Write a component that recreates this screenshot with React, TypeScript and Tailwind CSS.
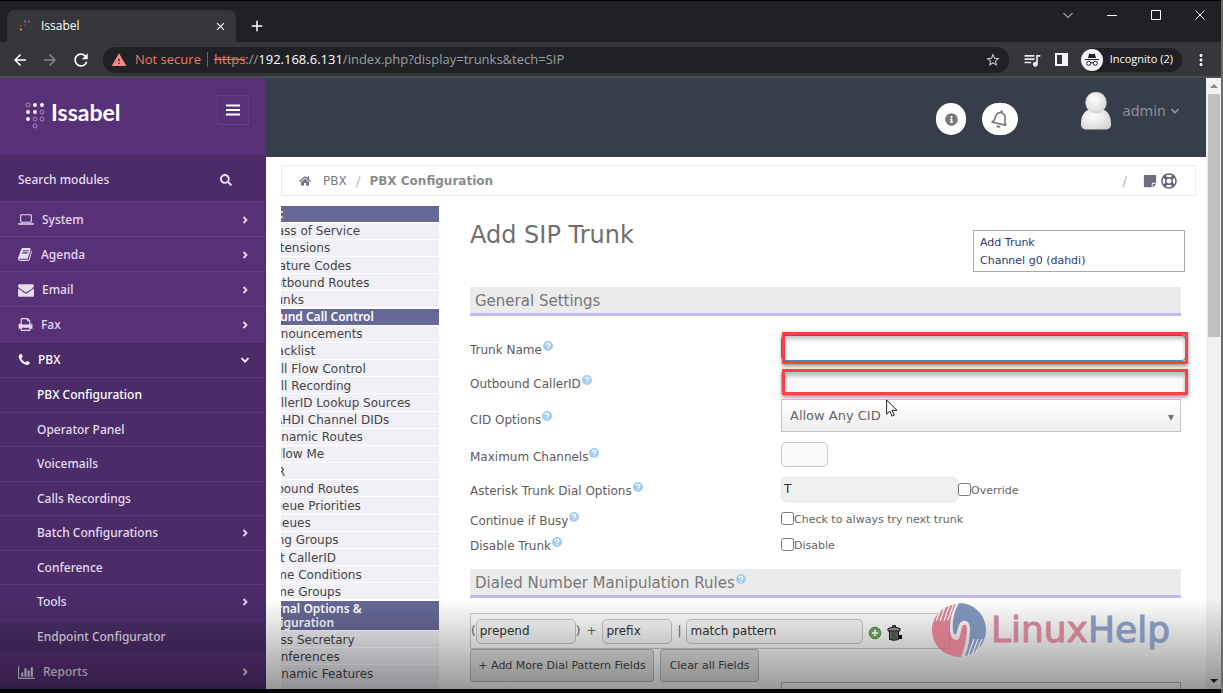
import React from "react";
import {
  MdArrowBack,
  MdArrowForward,
  MdRefresh,
  MdStarBorder,
  MdWarning,
  MdMoreVert,
  MdQueueMusic,
  MdClose,
  MdAdd,
} from "react-icons/md";
import { FaSearch, FaHome, FaStickyNote, FaRegLifeRing, FaInfoCircle, FaRegBell } from "react-icons/fa";

const glyphs = {
  laptop: {
    box: "0 0 1920 1792",
    d: "M416 1280q-66 0-113-47t-47-113v-704q0-66 47-113t113-47h1088q66 0 113 47t47 113v704q0 66-47 113t-113 47h-1088zm-32-864v704q0 13 9.5 22.5t22.5 9.5h1088q13 0 22.5-9.5t9.5-22.5v-704q0-13-9.5-22.5t-22.5-9.5h-1088q-13 0-22.5 9.5t-9.5 22.5zm1376 928h160v96q0 40-47 68t-113 28h-1600q-66 0-113-28t-47-68v-96h1760zm-720 96q16 0 16-16t-16-16h-160q-16 0-16 16t16 16h160z",
  },
  book: {
    box: "0 0 1792 1792",
    d: "M1639 478q40 57 18 129l-275 906q-19 64-76.5 107.5t-122.5 43.5h-923q-77 0-148.5-53.5t-99.5-131.5q-24-67-2-127 0-4 3-27t4-37q1-8-3-21.5t-3-19.5q2-11 8-21t16.5-23.5 16.5-23.5q23-38 45-91.5t30-91.5q3-10 .5-30t-.5-28q3-11 17-28t17-23q21-36 42-92t25-90q1-9-2.5-32t.5-28q4-13 22-30.5t22-22.5q19-26 42.5-84.5t27.5-96.5q1-8-3-25.5t-2-26.5q2-8 9-18t18-23 17-21q8-12 16.5-30.5t15-35 16-36 19.5-32 26.5-23.5 36-11.5 47.5 5.5l-1 3q38-9 51-9h761q74 0 114 56t18 130l-274 906q-36 119-71.5 153.5t-128.5 34.5h-869q-27 0-38 15-11 16-1 43 24 70 144 70h923q29 0 56-15.5t35-41.5l300-987q7-22 5-57 38 15 59 43zm-1064 2q-4 13 2 22.5t20 9.5h608q13 0 25.5-9.5t16.5-22.5l21-64q4-13-2-22.5t-20-9.5h-608q-13 0-25.5 9.5t-16.5 22.5zm-83 256q-4 13 2 22.5t20 9.5h608q13 0 25.5-9.5t16.5-22.5l21-64q4-13-2-22.5t-20-9.5h-608q-13 0-25.5 9.5t-16.5 22.5z",
  },
  envelope: {
    box: "0 0 1792 1792",
    d: "M1792 710v794q0 66-47 113t-113 47h-1472q-66 0-113-47t-47-113v-794q44 49 101 87 362 246 497 345 57 42 92.5 65.5t94.5 48 110 24.5h2q51 0 110-24.5t94.5-48 92.5-65.5q170-123 498-345 57-39 100-87zm0-294q0 79-49 151t-122 123q-376 261-468 325-10 7-42.5 30.5t-54 38-52 32.5-57.5 27-50 9h-2q-23 0-50-9t-57.5-27-52-32.5-54-38-42.5-30.5q-91-64-262-182.5t-205-142.5q-62-42-117-115.5t-55-136.5q0-78 41.5-130t118.5-52h1472q65 0 112.5 47t47.5 113z",
  },
  print: {
    box: "0 0 1792 1792",
    d: "M448 1536h896v-256h-896v256zm0-640h896v-384h-160q-40 0-68-28t-28-68v-160h-640v640zm1152 64q0-26-19-45t-45-19-45 19-19 45 19 45 45 19 45-19 19-45zm128 0v416q0 13-9.5 22.5t-22.5 9.5h-224v160q0 40-28 68t-68 28h-960q-40 0-68-28t-28-68v-160h-224q-13 0-22.5-9.5t-9.5-22.5v-416q0-79 56.5-135.5t135.5-56.5h64v-544q0-40 28-68t68-28h672q40 0 88 20t76 48l152 152q28 28 48 76t20 88v256h64q79 0 135.5 56.5t56.5 135.5z",
  },
  phone: {
    box: "192 0 1600 1792",
    d: "M1600 1240q0 27-10 70.5t-21 68.5q-21 50-122 106-94 51-186 51-27 0-53-3.5t-57.5-12.5-47-14.5-55.5-20.5-49-18q-98-35-175-83-127-79-264-216t-216-264q-48-77-83-175-3-9-18-49t-20.5-55.5-14.5-47-12.5-57.5-3.5-53q0-92 51-186 56-101 106-122 25-11 68.5-21t70.5-10q14 0 21 3 18 6 53 76 11 19 30 54t35 63.5 31 53.5q3 4 17.5 25t21.5 35.5 7 28.5q0 20-28.5 50t-62 55-62 53-28.5 46q0 9 5 22.5t8.5 20.5 14 24 11.5 19q76 137 174 235t235 174q2 1 19 11.5t24 14 20.5 8.5 22.5 5q18 0 46-28.5t53-62 55-62 50-28.5q14 0 28.5 7t35.5 21.5 25 17.5q25 15 53.5 31t63.5 35 54 30q70 35 76 53 3 7 3 21z",
  },
  chart: {
    box: "0 0 2048 1792",
    d: "M640 896v512h-256v-512h256zm384-512v1024h-256v-1024h256zm1024 1152v128h-2048v-1536h128v1408h1920zm-640-896v768h-256v-768h256zm384-384v1152h-256v-1152h256z",
  },
};

type GlyphName = keyof typeof glyphs;

function Glyph({ name, className }: { name: GlyphName; className: string }) {
  return (
    <svg viewBox={glyphs[name].box} className={className} fill="currentColor" aria-hidden="true">
      <path d={glyphs[name].d} />
    </svg>
  );
}

function Angle({ down = false }: { down?: boolean }) {
  return (
    <svg viewBox="0 0 10 10" className="size-[10px] shrink-0" fill="none" stroke="currentColor" strokeWidth="1.8" aria-hidden="true">
      <path d={down ? "M1.5 3.2 5 6.7 8.5 3.2" : "M3.5 2 6.500 5 3.5 8"} />
    </svg>
  );
}

function BrowserChrome() {
  return (
    <header className="shrink-0 border-t border-black bg-[#202124] font-['Open_Sans','Noto_Sans',sans-serif] text-white">
      <div className="flex h-[41px] items-start">
        <div className="mt-[9px] ml-[7px] flex h-8 w-[229px] items-center rounded-t-lg bg-[#35363a] pr-[9px] pl-3">
          <svg viewBox="0 0 12 12" className="size-3" aria-hidden="true">
            <circle cx="6" cy="1.5" r="1" fill="#4a90c4" />
            <circle cx="10" cy="1.5" r="1" fill="#e0602a" />
            <circle cx="2" cy="5.5" r="1" fill="#c0392b" />
            <circle cx="6" cy="5.5" r="1" fill="#6f4aa0" />
            <circle cx="2" cy="9.5" r="1" fill="#e8a33d" />
          </svg>
          <span className="ml-[10px] grow text-xs">Issabel</span>
          <button type="button" aria-label="Close tab">
            <MdClose className="size-[13px]" />
          </button>
        </div>
        <button type="button" aria-label="New tab" className="mt-4 ml-3">
          <MdAdd className="size-[18px]" />
        </button>
        <div className="mt-[9px] mr-4 ml-auto flex items-center gap-[34px]">
          <button type="button" aria-label="Search tabs">
            <svg viewBox="0 0 10 10" className="size-[10px]" fill="none" stroke="#fff" aria-hidden="true">
              <path d="M0.5 3 5 7.5 9.500 3" />
            </svg>
          </button>
          <button type="button" aria-label="Minimize">
            <svg viewBox="0 0 10 10" className="size-[10px]" fill="none" stroke="#fff" aria-hidden="true">
              <path d="M0 5.500h10" />
            </svg>
          </button>
          <button type="button" aria-label="Maximize">
            <svg viewBox="0 0 10 10" className="size-[10px]" fill="none" stroke="#fff" aria-hidden="true">
              <path d="M0.5 0.5h9v9h-9z" />
            </svg>
          </button>
          <button type="button" aria-label="Close window">
            <svg viewBox="0 0 10 10" className="size-[10px]" fill="none" stroke="#fff" aria-hidden="true">
              <path d="M0.500 0.500l9 9M9.500 0.500l-9 9" />
            </svg>
          </button>
        </div>
      </div>
      <div className="flex h-9 items-center border-b-2 border-[#4b4c50] bg-[#35363a] pt-px pr-[11px] pl-[11px]">
        <button type="button" aria-label="Back">
          <MdArrowBack className="size-[18px]" />
        </button>
        <button type="button" aria-label="Forward" className="ml-3 text-[#85868a]">
          <MdArrowForward className="size-[18px]" />
        </button>
        <button type="button" aria-label="Reload" className="ml-3">
          <MdRefresh className="size-5" />
        </button>
        <div className="ml-3 flex h-[26px] grow items-center rounded-full bg-[#202124] pr-2 pl-2 text-[13px]">
          <MdWarning className="size-4 text-[#f28b82]" />
          <span className="ml-2 text-[#f2766b]">Not secure</span>
          <span className="mx-[6px] h-[15px] w-px bg-[#5f6368]" />
          <span className="grow text-[#9aa0a6]">
            <span className="text-[#f2766b] line-through">https</span>://<span className="text-white">192.168.6.131</span>
            /index.php?display=trunks&amp;tech=SIP
          </span>
          <button type="button" aria-label="Bookmark this page" className="text-[#c8cacd]">
            <MdStarBorder className="size-4" />
          </button>
        </div>
        <MdQueueMusic className="ml-[13px] size-5 text-[#e8eaed]" />
        <svg viewBox="0 0 13 13" className="ml-[13px] size-[13px]" aria-hidden="true">
          <path d="M0 0h13v13H0zM2 2v9h5V2z" fill="#f1f3f4" fillRule="evenodd" />
        </svg>
        <button type="button" className="ml-[13px] flex h-6 items-center rounded-full bg-[#202124] pr-[9px] text-[11px]">
          <svg viewBox="0 0 22 22" className="mr-[7px] size-[22px]" aria-hidden="true">
            <circle cx="11" cy="11" r="11" fill="#f1f3f4" />
            <path d="M7 9l1.200-4.500 2.800.8 2.800-.8L15 9zM4 10h14v1H4z" fill="#202124" />
            <circle cx="7.700" cy="14.300" r="2.100" fill="none" stroke="#202124" />
            <circle cx="14.300" cy="14.300" r="2.100" fill="none" stroke="#202124" />
            <path d="M9.800 14q1.200-.8 2.400 0" fill="none" stroke="#202124" />
          </svg>
          Incognito (2)
        </button>
        <button type="button" aria-label="Browser menu" className="ml-[10px]">
          <MdMoreVert className="size-[18px]" />
        </button>
      </div>
    </header>
  );
}

const topItems: { icon: GlyphName; size: string; label: string }[] = [
  { icon: "laptop", size: "h-[15px] w-4 mr-2", label: "System" },
  { icon: "book", size: "size-[15px] mr-2", label: "Agenda" },
  { icon: "envelope", size: "size-4 mr-2", label: "Email" },
  { icon: "print", size: "size-[15px] mr-2", label: "Fax" },
];

const pbxItems = [
  { label: "PBX Configuration", active: true },
  { label: "Operator Panel" },
  { label: "Voicemails" },
  { label: "Calls Recordings" },
  { label: "Batch Configurations", more: true },
  { label: "Conference" },
  { label: "Tools", more: true },
  { label: "Endpoint Configurator" },
];

function IssabelLogo() {
  return (
    <a href="#home" className="flex items-start text-white">
      <svg viewBox="0 0 20 28" className="h-7 w-5" aria-hidden="true">
        <g fill="#fff">
          <circle cx="10" cy="4" r="1.900" />
          <circle cx="17" cy="4" r="1.900" />
          <circle cx="3" cy="11" r="1.900" />
          <circle cx="10" cy="11" r="1.900" />
          <circle cx="3" cy="18" r="1.900" />
        </g>
        <g fill="none" stroke="#b79fd0" strokeWidth="0.8">
          <circle cx="3" cy="4" r="2" />
          <circle cx="17" cy="11" r="2" />
          <circle cx="10" cy="18" r="2" />
          <circle cx="17" cy="18" r="2" />
          <circle cx="10" cy="25" r="2" />
        </g>
      </svg>
      <span className="ml-[6px] font-['Lato',sans-serif] text-[23px] leading-[22px] font-bold">Issabel</span>
    </a>
  );
}

function Sidebar() {
  return (
    <aside className="flex w-[266px] shrink-0 flex-col overflow-hidden border-r border-[#4b2c69] bg-[#583078] font-['Noto_Sans',sans-serif] text-xs font-medium text-[#e6dcf0]">
      <div className="flex h-[77px] shrink-0 items-start justify-between pt-[17px] pr-4 pl-[25px]">
        <div className="pt-[6px]">
          <IssabelLogo />
        </div>
        <button
          type="button"
          aria-label="Toggle menu"
          className="flex h-[30px] w-8 items-center justify-center border border-[#663a8c]"
        >
          <svg viewBox="0 0 14 12" className="h-3 w-[14px]" stroke="#fff" strokeWidth="2" aria-hidden="true">
            <path d="M0 1.500h14M0 6h14M0 10.500h14" />
          </svg>
        </button>
      </div>
      <div className="flex h-[47px] shrink-0 items-center border-b border-[#5f3785] bg-[#4b2c69] pt-1 pr-[33px] pl-[18px]">
        <input
          aria-label="Search modules"
          placeholder="Search modules"
          className="w-full min-w-0 grow bg-transparent outline-none placeholder:text-[#e6dcf0]"
        />
        <button type="button" aria-label="Search">
          <FaSearch className="size-3" />
        </button>
      </div>
      <nav>
        <ul>
          {topItems.map((item) => (
            <li key={item.label}>
              <a href="#module" className="flex h-[35px] items-center border-b border-[#653c8c] pt-px pr-[15px] pl-[18px]">
                <Glyph name={item.icon} className={item.size} />
                <span className="grow">{item.label}</span>
                <Angle />
              </a>
            </li>
          ))}
          <li className="bg-[#4b2c69]">
            <a href="#pbx" className="flex h-9 items-center border-b border-[#563675] pt-px pr-[15px] pl-[18px] text-white">
              <Glyph name="phone" className="mr-[6px] size-[14px]" />
              <span className="grow">PBX</span>
              <Angle down />
            </a>
            <ul className="grid h-[276px] auto-rows-fr">
              {pbxItems.map((item) => (
                <li key={item.label} className="border-b border-[#563675]">
                  <a
                    href="#pbx-item"
                    className={item.active ? "flex h-full items-center pt-px pr-[15px] pl-[37px] text-white" : "flex h-full items-center pt-px pr-[15px] pl-[37px]"}
                  >
                    <span className="grow">{item.label}</span>
                    {item.more && <Angle />}
                  </a>
                </li>
              ))}
            </ul>
          </li>
          <li>
            <a href="#reports" className="flex h-9 items-center bg-[#583078] pr-[15px] pl-[18px]">
              <Glyph name="chart" className="mr-2 h-[15px] w-[17px]" />
              <span className="grow">Reports</span>
              <Angle />
            </a>
          </li>
        </ul>
      </nav>
    </aside>
  );
}

function TopBar() {
  return (
    <div className="flex h-[79px] shrink-0 items-start justify-end bg-[#373d4a] pr-[26px]">
      <button type="button" aria-label="Information" className="mt-[25px] flex h-8 w-[30px] items-center justify-center rounded-full bg-white text-[#7b7b7b]">
        <FaInfoCircle className="size-[13px]" />
      </button>
      <button type="button" aria-label="Notifications" className="mt-[25px] ml-4 flex h-8 w-9 items-center justify-center rounded-full bg-white text-[#7b7b7b]">
        <FaRegBell className="size-[18px] rotate-12" />
      </button>
      <button type="button" className="mt-[14px] ml-[62px] flex items-center font-['DejaVu_Sans',sans-serif] text-sm text-[#8b909b]">
        <svg viewBox="0 0 32 38" className="mr-[10px] h-[38px] w-8" aria-hidden="true">
          <defs>
            <radialGradient id="avatar" cx="0.4" cy="0.35" r="0.8">
              <stop offset="0" stopColor="#ffffff" />
              <stop offset="1" stopColor="#cfcfcd" />
            </radialGradient>
          </defs>
          <path d="M1 32C1 23 5 18 11 17h10c6 1 10 6 10 15 0 4-2 5.500-6 5.500H7C3 37.500 1 36 1 32z" fill="url(#avatar)" />
          <circle cx="16" cy="10.500" r="10.500" fill="url(#avatar)" stroke="#c4c4c2" strokeWidth="0.5" />
        </svg>
        admin
        <span className="ml-1">
          <Angle down />
        </span>
      </button>
    </div>
  );
}

function Breadcrumb() {
  return (
    <nav className="mt-2 mr-[10px] ml-[15px] flex h-[33px] items-center border border-[#ebebeb] pr-[18px] pl-[17px] text-[12px] text-[#757a82]">
      <FaHome className="size-3" />
      <a href="#pbx" className="ml-3">PBX</a>
      <span className="mx-[9px] text-sm text-[#bbb]">/</span>
      <a href="#pbx-configuration" className="grow font-bold text-[#8c8c8c]">PBX Configuration</a>
      <span className="text-sm text-[#bbb]">/</span>
      <FaStickyNote className="ml-4 size-[14px] text-[#6d6d7d]" />
      <FaRegLifeRing className="ml-1 size-4 text-[#5f6577]" />
    </nav>
  );
}

const basicItems = ["Class of Service", "Extensions", "Feature Codes", "Outbound Routes", "Trunks"];
const inboundItems = [
  "Announcements",
  "Blacklist",
  "Call Flow Control",
  "Call Recording",
  "CallerID Lookup Sources",
  "DAHDI Channel DIDs",
  "Dynamic Routes",
  "Follow Me",
  "IVR",
  "Inbound Routes",
  "Queue Priorities",
  "Queues",
  "Ring Groups",
  "Set CallerID",
  "Time Conditions",
  "Time Groups",
];
const optionItems = ["Boss Secretary", "Conferences", "Dynamic Features"];

function MenuHeading({ children }: { children: React.ReactNode }) {
  return (
    <li className="my-px flex items-center bg-[#686898] font-['Noto_Sans',sans-serif] text-xs leading-[14px] font-semibold text-white">
      <span className="-ml-7 whitespace-pre">{children}</span>
    </li>
  );
}

function MenuLinks({ items }: { items: string[] }) {
  return (
    <>
      {items.map((label) => (
        <li key={label} className="flex items-center border-b border-white bg-[#f0f0f6] pt-px text-[#444]">
          <a href="#section" className="-ml-4 leading-[14px] whitespace-nowrap">
            {label}
          </a>
        </li>
      ))}
    </>
  );
}

function PbxMenu() {
  return (
    <nav className="mt-[9px] w-[158px] shrink-0 overflow-hidden text-[12px]">
      <ul className="grid h-[103px] auto-rows-fr">
        <MenuHeading>Basic</MenuHeading>
        <MenuLinks items={basicItems} />
      </ul>
      <ul className="grid h-[292px] auto-rows-fr">
        <MenuHeading>Inbound Call Control</MenuHeading>
        <MenuLinks items={inboundItems} />
      </ul>
      <ul className="grid auto-rows-[17px] grid-rows-[31px]">
        <MenuHeading>{"Internal Options &\nConfiguration"}</MenuHeading>
        <MenuLinks items={optionItems} />
        <li className="bg-[#f0f0f6]" />
      </ul>
    </nav>
  );
}

function Help() {
  return (
    <svg viewBox="0 0 10 10" className="mb-2 ml-px size-[10px] shrink-0" aria-hidden="true">
      <circle cx="5" cy="5" r="5" fill="#a5cdec" />
      <path d="M3.300 4C3.300 1.800 6.700 1.900 6.700 3.900 6.700 5 5 5 5 6.200M5 7.200v1" fill="none" stroke="#fff" strokeWidth="1.200" />
    </svg>
  );
}

function SectionTitle({ children, help = false }: { children: string; help?: boolean }) {
  return (
    <h2 className="flex h-[29px] items-center border-b-[3px] border-[#c6b6fa] bg-[#ebebeb] pt-0.5 pl-[5px] text-[15px] text-[#777]">
      {children}
      {help && <Help />}
    </h2>
  );
}

function Field({ label, id, height, children }: { label: string; id: string; height: string; children: React.ReactNode }) {
  return (
    <div className={`grid grid-cols-[311px_minmax(0,1fr)] items-center ${height}`}>
      <label htmlFor={id} className="flex items-center pt-1 text-[#5c5c5c]">
        {label}
        <Help />
      </label>
      <div className="flex items-center">{children}</div>
    </div>
  );
}

function Highlight({ className }: { className: string }) {
  return (
    <span
      className={`pointer-events-none absolute left-px -right-[2px] border-[3px] border-[#fb4141] shadow-[0_2px_4px_rgba(0,0,0,0.45),inset_0_4px_4px_rgba(0,0,0,0.25)] ${className}`}
    />
  );
}

function LinuxHelpMark() {
  return (
    <div className="pointer-events-none absolute right-[51px] bottom-[32px] flex items-center opacity-80">
      <svg viewBox="0 0 54 54" className="size-[54px]" aria-hidden="true">
        <path
          d="M24 1C20 8 18 16 18 25c0 7 2 12 6 12 5 0 4-8 6-13 1-3 5-3 5 1 0 11-3 21-6 29C13 54 0 43 0 27 0 14 10 3 24 1z"
          fill="#cf6478"
        />
        <path
          d="M27 0c15 0 27 12 27 27 0 11-7 21-17 25l-4 1c3-7 5-17 5-27 0-6-3-9-7-8-4 1-5 7-6 11-1 4-4 3-4-2C20 18 22 8 27 0z"
          fill="#6379a8"
        />
        <path d="M9 6 4 18M13 4 8 18M17.500 2 12 18M21.500 1 16 17" stroke="#eee" strokeWidth="1.300" />
        <path d="M42 36 36 53M46 36 40 52M50 36 44 49" stroke="#ddd" strokeWidth="1.300" />
      </svg>
      <span className="ml-[5px] font-['DejaVu_Sans',sans-serif] text-4xl leading-10">
        <span className="text-[#c4687c] [-webkit-text-stroke:1px_#c4687c]">Linux</span>
        <span className="text-[#6b80ad] [-webkit-text-stroke:1px_#6b80ad]">Help</span>
      </span>
    </div>
  );
}

const boxInput = "h-[25px] rounded-[5px] border border-[#c8c8c8] bg-[#fafafa] px-[3px] text-[12px] text-[#333] outline-none";
const footButton = "h-[33px] rounded-[3px] border border-[#bbb] bg-[#e6e6e6] text-[11px] text-[#444]";

function CheckOption({ id, text }: { id: string; text: string }) {
  return (
    <label className="flex items-center text-[11px] text-[#666]">
      <input id={id} type="checkbox" className="size-[13px]" />
      <span className="pt-[3px]">{text}</span>
    </label>
  );
}

function TrunkForm() {
  return (
    <main className="mr-[25px] ml-[31px] grow text-[12px]">
      <div className="flex h-[91px] items-start justify-between">
        <h1 className="mt-[23px] text-2xl leading-8 text-[#707070]">Add SIP Trunk</h1>
        <div className="mt-[34px] -mr-1 flex h-[42px] w-[212px] flex-col border border-[#aaa] bg-white pt-[3px] pl-[6px] text-[11px] leading-[18px] text-[#2b3a70]">
          <a href="#add-trunk">Add Trunk</a>
          <a href="#channel-g0">Channel g0 (dahdi)</a>
        </div>
      </div>
      <SectionTitle>General Settings</SectionTitle>
      <form className="mt-[14px]">
        <Field label="Trunk Name" id="trunk-name" height="h-[35px]">
          <div className="relative -mr-[5px] grow">
            <input id="trunk-name" className="block h-[26px] w-full rounded-[4px] border border-[#4a90c8] bg-white px-2 outline-none" />
            <Highlight className="-top-[3px] -bottom-[3px]" />
          </div>
        </Field>
        <Field label="Outbound CallerID" id="outbound-cid" height="h-[34px]">
          <div className="relative -mr-[5px] grow">
            <input id="outbound-cid" className="block h-6 w-full rounded-[4px] border border-[#ccc] bg-[#fafafa] px-2 outline-none" />
            <Highlight className="-top-px -bottom-px" />
          </div>
        </Field>
        <Field label="CID Options" id="cid-options" height="h-[37px]">
          <div className="relative mb-1 grow">
            <select
              id="cid-options"
              className="block h-[33px] w-full appearance-none border border-[#c4c4c4] bg-linear-to-b from-white to-[#eee] px-2 text-[13px] text-[#666] outline-none"
            >
              <option>Allow Any CID</option>
            </select>
            <svg viewBox="0 0 6 6" className="pointer-events-none absolute top-4 right-[7px] size-[6px]" aria-hidden="true">
              <path d="M0 0h6L3 6z" fill="#777" />
            </svg>
            <svg viewBox="0 0 12 18" className="pointer-events-none absolute top-0 left-[105px] h-[18px] w-3" aria-hidden="true">
              <path d="M.6 1v14.200l3.300-3.100 2.200 5 2.200-1-2.200-4.800H11z" fill="#fff" stroke="#222" />
            </svg>
          </div>
        </Field>
        <Field label="Maximum Channels" id="max-channels" height="h-[37px]">
          <input id="max-channels" className={`${boxInput} w-[47px]`} />
        </Field>
        <Field label="Asterisk Trunk Dial Options" id="dial-options" height="h-[32px]">
          <input
            id="dial-options"
            defaultValue="T"
            readOnly
            className="h-[25px] w-[177px] rounded-[5px] border border-[#e4e4e4] bg-[#f0f0f0] px-[2px] text-[12px] text-[#333] outline-none"
          />
          <CheckOption id="override" text="Override" />
        </Field>
        <Field label="Continue if Busy" id="continue-busy" height="h-[27px]">
          <CheckOption id="continue-busy" text="Check to always try next trunk" />
        </Field>
        <Field label="Disable Trunk" id="disable-trunk" height="h-[24px]">
          <CheckOption id="disable-trunk" text="Disable" />
        </Field>
        <div className="mt-[13px]">
          <SectionTitle help>Dialed Number Manipulation Rules</SectionTitle>
        </div>
        <div className="mt-[15px] flex h-9 w-[480px] items-center border border-[#ccc] text-[#666]">
          (
          <input aria-label="Prepend" defaultValue="prepend" className={`${boxInput} w-[100px]`} />
          )<span className="mx-[6px]">+</span>
          <input aria-label="Prefix" defaultValue="prefix" className={`${boxInput} w-[70px]`} />
          <span className="mx-[5px]">|</span>
          <input aria-label="Match pattern" defaultValue="match pattern" className={`${boxInput} w-[177px]`} />
          <button type="button" aria-label="Add pattern" className="mt-1 ml-[5px]">
            <svg viewBox="0 0 14 14" className="size-[14px]" aria-hidden="true">
              <circle cx="7" cy="7" r="5.800" fill="#6fb45f" stroke="#4c8a42" />
              <path d="M7 4v6M4 7h6" stroke="#fff" strokeWidth="1.800" />
            </svg>
          </button>
          <button type="button" aria-label="Delete pattern" className="mt-1 ml-[5px]">
            <svg viewBox="0 0 16 16" className="size-4" aria-hidden="true">
              <path d="M2.500 5.500h9v9q-4.500 1.500-9 0z" fill="#7c8076" stroke="#111" />
              <path d="M12 10h3v4h-3z" fill="#111" />
              <path d="M1 3.500Q7 .5 13 3.500V6H1z" fill="#9a9e92" stroke="#111" />
              <path d="M5 1h4" stroke="#111" strokeWidth="1.500" />
              <path d="M5 7v7M7 7v7M9 7v7" stroke="#2a2a2a" strokeWidth="0.8" />
            </svg>
          </button>
        </div>
        <div className="flex gap-[6px]">
          <button type="button" className={`${footButton} w-[184px]`}>+ Add More Dial Pattern Fields</button>
          <button type="button" className={`${footButton} w-[99px]`}>Clear all Fields</button>
        </div>
        <div className="ml-[311px] h-8 border border-[#bbb]" />
      </form>
    </main>
  );
}

function ScrollBar() {
  return (
    <div className="flex w-[15px] shrink-0 flex-col items-center bg-[#f1f1f1]">
      <svg viewBox="0 0 8 4" className="mt-[6px] h-1 w-2" aria-hidden="true">
        <path d="M4 0l4 4H0z" fill="#888" />
      </svg>
      <div className="mt-[6px] h-[243px] w-3 bg-[#c1c1c1]" />
      <svg viewBox="0 0 8 4" className="mt-auto mb-[6px] h-1 w-2" aria-hidden="true">
        <path d="M0 0h8L4 4z" fill="#222" />
      </svg>
    </div>
  );
}

export default function App() {
  return (
    <div className="flex h-screen flex-col overflow-hidden border-r-2 border-[#6a6a6a] bg-white">
      <BrowserChrome />
      <div className="relative flex min-h-0 grow overflow-hidden border-b-4 border-black">
        <Sidebar />
        <div className="flex min-w-0 grow flex-col overflow-hidden font-['DejaVu_Sans',sans-serif]">
          <TopBar />
          <Breadcrumb />
          <div className="flex min-h-0 grow overflow-hidden pl-[15px]">
            <PbxMenu />
            <TrunkForm />
          </div>
        </div>
        <ScrollBar />
        <div className="pointer-events-none absolute inset-x-0 bottom-0 h-[90px] bg-linear-to-b from-black/0 to-black/40" />
        <LinuxHelpMark />
      </div>
    </div>
  );
}
